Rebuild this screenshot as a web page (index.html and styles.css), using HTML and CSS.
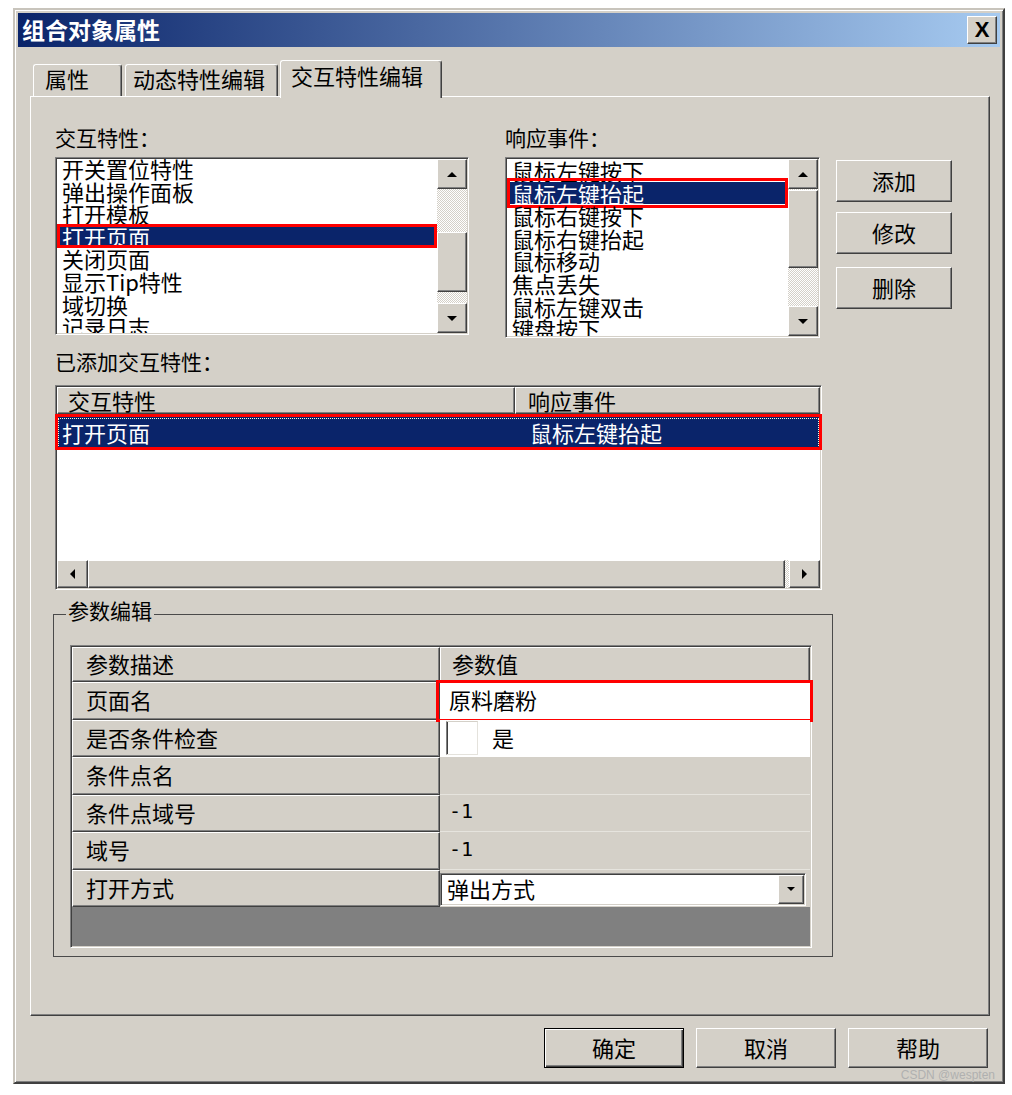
FILE: index.html
```html
<!DOCTYPE html>
<html lang="zh-CN">
<head>
<meta charset="utf-8">
<title>组合对象属性</title>
<link rel="stylesheet" href="styles.css">
</head>
<body>
<div class="dialog">
  <div class="titlebar">
    <span class="title">组合对象属性</span>
    <span class="close raised">X</span>
  </div>
  <div class="body">
    <div class="tabs">
      <div class="tab t1">属性</div>
      <div class="tab t2">动态特性编辑</div>
      <div class="tab t3">交互特性编辑</div>
    </div>
    <div class="panel">
      <div class="top-row">
        <div class="col-left">
          <div class="label">交互特性：</div>
          <div class="listbox sunken lb-left">
            <div class="items">
              <div class="item">开关置位特性</div>
              <div class="item">弹出操作面板</div>
              <div class="item">打开模板</div>
              <div class="item sel">打开页面</div>
              <div class="item">关闭页面</div>
              <div class="item">显示Tip特性</div>
              <div class="item">域切换</div>
              <div class="item">记录日志</div>
            </div>
            <div class="vscroll">
              <div class="sbtn raised"><span class="tri up"></span></div>
              <div class="track checker"><div class="thumb raised"></div></div>
              <div class="sbtn raised"><span class="tri down"></span></div>
            </div>
          </div>
        </div>
        <div class="col-mid">
          <div class="label">响应事件：</div>
          <div class="listbox sunken lb-mid">
            <div class="items">
              <div class="item">鼠标左键按下</div>
              <div class="item sel">鼠标左键抬起</div>
              <div class="item">鼠标右键按下</div>
              <div class="item">鼠标右键抬起</div>
              <div class="item">鼠标移动</div>
              <div class="item">焦点丢失</div>
              <div class="item">鼠标左键双击</div>
              <div class="item">键盘按下</div>
            </div>
            <div class="vscroll">
              <div class="sbtn raised"><span class="tri up"></span></div>
              <div class="track checker"><div class="thumb raised"></div></div>
              <div class="sbtn raised"><span class="tri down"></span></div>
            </div>
          </div>
        </div>
        <div class="btn-col">
          <div class="btn raised sidebtn">添加</div>
          <div class="btn raised sidebtn b2">修改</div>
          <div class="btn raised sidebtn b3">删除</div>
        </div>
      </div>

      <div class="label label2">已添加交互特性：</div>
      <div class="listview sunken">
        <div class="lv-head">
          <div class="lv-h raised lv-h1">交互特性</div>
          <div class="lv-h raised lv-h2">响应事件</div>
        </div>
        <div class="lv-row">
          <div class="lv-c1">打开页面</div>
          <div class="lv-c2">鼠标左键抬起</div>
        </div>
        <div class="lv-space"></div>
        <div class="hscroll checker">
          <div class="hbtn raised"><span class="tri left"></span></div>
          <div class="hthumb raised"></div>
          <div class="hbtn raised"><span class="tri right"></span></div>
        </div>
      </div>

      <fieldset class="group">
        <legend>参数编辑</legend>
        <div class="pgrid sunken">
          <div class="pl raised">参数描述</div>
          <div class="pl raised ph2">参数值</div>

          <div class="pl raised">页面名</div>
          <div class="pv white red">原料磨粉</div>

          <div class="pl raised">是否条件检查</div>
          <div class="pv white"><span class="chk"></span><span class="chk-text">是</span></div>

          <div class="pl raised">条件点名</div>
          <div class="pv gray"></div>

          <div class="pl raised">条件点域号</div>
          <div class="pv gray num">-1</div>

          <div class="pl raised">域号</div>
          <div class="pv gray num">-1</div>

          <div class="pl raised">打开方式</div>
          <div class="pv combo-cell">
            <div class="combo sunken">
              <span>弹出方式</span>
              <span class="dd raised"><span class="tri down small"></span></span>
            </div>
          </div>

          <div class="pfill"></div>
        </div>
      </fieldset>
    </div>

    <div class="footer">
      <div class="btn raised fbtn default">确定</div>
      <div class="btn raised fbtn">取消</div>
      <div class="btn raised fbtn">帮助</div>
    </div>
  </div>
  <div class="watermark">CSDN @wespten</div>
</div>
</body>
</html>
```

FILE: styles.css
```css
body {
  margin: 0;
  padding: 8px 0 0 13px;
  background: #fff;
  font-family: "Noto Sans CJK SC", "Noto Sans CJK JP", sans-serif;
  color: #000;
}

.raised {
  background: #d4d0c8;
  box-sizing: border-box;
  border: 1px solid;
  border-color: #fff #404040 #404040 #fff;
  box-shadow: inset -1px -1px #808080;
}

.sunken {
  box-sizing: border-box;
  border: 1px solid;
  border-color: #808080 #fff #fff #808080;
  padding: 1px;
  box-shadow: inset 1px 1px #404040, inset -1px -1px #d4d0c8;
}

.checker {
  background: repeating-conic-gradient(#fff 0 25%, #d4d0c8 0 50%) 0 0 / 2px 2px;
}

.dialog {
  position: relative;
  width: 992px;
  height: 1076px;
  box-sizing: border-box;
  background: #d4d0c8;
  border: 2px solid;
  border-color: #c8c4bc #404040 #404040 #c8c4bc;
  box-shadow: inset 1px 1px #fff, inset -1px -1px #808080;
  padding: 3px;
  display: flex;
  flex-direction: column;
}

.titlebar {
  height: 34px;
  flex: none;
  display: flex;
  align-items: center;
  justify-content: space-between;
  padding: 0 3px 0 4px;
  background: linear-gradient(90deg, #0a246a, #a6caf0);
}

.title {
  color: #fff;
  font-weight: 700;
  font-size: 23px;
  line-height: 32px;
  padding-bottom: 2px;
  white-space: nowrap;
}

.close {
  width: 30px;
  height: 28px;
  display: flex;
  align-items: center;
  justify-content: center;
  font: bold 22px "Liberation Sans", Arial, sans-serif;
  color: #000;
}

.body {
  flex: 1;
  display: flex;
  flex-direction: column;
  padding: 13px 10px 0 12px;
}

.tabs {
  display: flex;
  align-items: flex-end;
  height: 36px;
  flex: none;
  position: relative;
  z-index: 1;
}

.tab {
  box-sizing: border-box;
  height: 32px;
  font-size: 22px;
  line-height: 27px;
  white-space: nowrap;
  background: #d4d0c8;
  border-top: 1px solid #fff;
  border-left: 1px solid #fff;
  border-right: 1px solid #404040;
  box-shadow: inset -1px 0 #808080;
  border-radius: 3px 3px 0 0;
}

.t1 { width: 89px; margin-left: 3px; padding-left: 11px; }
.t2 { width: 153px; margin-left: 3px; padding-left: 7px; }
.t3 {
  width: 162px;
  margin-left: 2px;
  height: 38px;
  margin-bottom: -2px;
  padding-left: 10px;
  line-height: 29px;
}

.panel {
  height: 920px;
  flex: none;
  box-sizing: border-box;
  border: 1px solid;
  border-color: #fff #404040 #404040 #fff;
  box-shadow: inset -1px -1px #808080;
  padding: 29px 0 0 24px;
}

.top-row {
  display: flex;
  align-items: flex-start;
}

.col-left { width: 414px; }
.col-mid { width: 315px; margin-left: 36px; }

.btn-col {
  width: 116px;
  margin-left: 16px;
  margin-top: 34px;
  display: flex;
  flex-direction: column;
}

.label {
  font-size: 21px;
  line-height: 22px;
  height: 22px;
  margin-bottom: 9px;
  white-space: nowrap;
}

.label2 {
  margin-top: 12px;
  margin-bottom: 13px;
}

.listbox {
  display: flex;
  background: #fff;
}

.lb-left { height: 178px; }
.lb-mid { height: 181px; }

.items {
  flex: 1;
  overflow: hidden;
  background: #fff;
}

.lb-left .item:first-child { margin-top: -2px; }

.item {
  font-size: 22px;
  line-height: 22.6px;
  height: 22.6px;
  padding-left: 5px;
  white-space: nowrap;
  position: relative;
}

.item.sel {
  background: #0a246a;
  color: #fff;
}

.item.sel::after {
  content: "";
  position: absolute;
  left: 0;
  right: 0;
  top: -1px;
  bottom: -1px;
  border: 3px solid #f00;
}

.lb-mid .item.sel::after {
  top: -4px;
  bottom: -4px;
}

.vscroll {
  width: 30px;
  flex: none;
  display: flex;
  flex-direction: column;
}

.sbtn {
  height: 30px;
  flex: none;
  display: flex;
  align-items: center;
  justify-content: center;
}

.track {
  flex: 1;
  display: flex;
  flex-direction: column;
}

.lb-left .thumb { margin-top: 43px; height: 60px; }
.lb-mid .thumb { margin-top: 1px; height: 78px; }

.tri {
  width: 0;
  height: 0;
  border-style: solid;
  display: block;
}
.tri.up { border-width: 0 5px 5px; border-color: transparent transparent #000; }
.tri.down { border-width: 5px 5px 0; border-color: #000 transparent transparent; }
.tri.left { border-width: 5px 5px 5px 0; border-color: transparent #000 transparent transparent; }
.tri.right { border-width: 5px 0 5px 5px; border-color: transparent transparent transparent #000; }
.tri.small { border-width: 4px 4px 0; }

.btn {
  display: flex;
  align-items: center;
  justify-content: center;
  font-size: 22px;
  white-space: nowrap;
  padding-bottom: 3px;
}

.sidebtn { height: 42px; }
.b2 { margin-top: 10px; }
.b3 { margin-top: 13px; }

.listview {
  width: 767px;
  height: 205px;
  display: flex;
  flex-direction: column;
  background: #fff;
}

.lv-head {
  display: flex;
  height: 27px;
  flex: none;
}

.lv-h {
  font-size: 22px;
  line-height: 24px;
  white-space: nowrap;
}

.lv-h1 { width: 458px; padding-left: 10px; }
.lv-h2 { flex: 1; padding-left: 12px; }

.lv-row {
  margin-top: 3px;
  height: 32px;
  flex: none;
  display: flex;
  align-items: center;
  background: #0a246a;
  color: #fff;
  font-size: 22px;
  position: relative;
  white-space: nowrap;
  padding-bottom: 2px;
  box-sizing: border-box;
}

.lv-row::before {
  content: "";
  position: absolute;
  left: 1px;
  right: 1px;
  top: 1px;
  bottom: 1px;
  border: 1px dotted #fffbd8;
}

.lv-row::after {
  content: "";
  position: absolute;
  left: -2px;
  right: -2px;
  top: -3px;
  bottom: -1px;
  border: 3px solid #f00;
}

.lv-c1 { width: 458px; padding-left: 5px; box-sizing: border-box; }
.lv-c2 { padding-left: 15px; }

.lv-space { flex: 1; }

.hscroll {
  height: 28px;
  flex: none;
  display: flex;
}

.hbtn {
  width: 31px;
  flex: none;
  display: flex;
  align-items: center;
  justify-content: center;
}

.hthumb {
  flex: 1;
  margin-right: 4px;
}

.group {
  margin: 9px 0 0 -2px;
  width: 780px;
  box-sizing: border-box;
  border: 1px solid #4a4a4a;
  padding: 16px 21px 8px 16px;
  min-width: 0;
}

.group legend {
  font-size: 21px;
  line-height: 22px;
  padding: 0 2px 8px;
  margin-left: -4px;
  white-space: nowrap;
}

.pgrid {
  display: grid;
  grid-template-columns: 368px 1fr;
  grid-template-rows: 35px repeat(6, 37.5px) 1fr;
  width: 742px;
  height: 303px;
  background: #808080;
}

.pl {
  font-size: 22px;
  display: flex;
  align-items: center;
  padding-left: 13px;
  padding-bottom: 3px;
  white-space: nowrap;
}

.ph2 { padding-left: 11px; }

.pv {
  display: flex;
  align-items: center;
  font-size: 22px;
  padding-left: 9px;
  padding-bottom: 3px;
  box-sizing: border-box;
  position: relative;
  white-space: nowrap;
}

.pv.white { background: #fff; }

.pv.gray {
  background: #d4d0c8;
  border-bottom: 1px solid #e6e4de;
}

.pv.num {
  font-family: "DejaVu Sans Mono", "Liberation Mono", monospace;
  font-size: 20px;
}

.pv.red::after {
  content: "";
  position: absolute;
  left: -4px;
  right: -3px;
  top: -2px;
  bottom: -2px;
  border: 3px solid #f00;
}

.chk {
  width: 32px;
  height: 34px;
  box-sizing: border-box;
  border: 1px solid;
  border-color: #d4d0c8 #e4e2dc #e4e2dc #808080;
  box-shadow: inset 1px 0 #404040;
  background: #fff;
  margin-left: -3px;
  margin-top: 3px;
}

.chk-text { margin-left: 14px; }

.combo-cell {
  background: #d4d0c8;
  padding: 3px 4px 1px 0;
  align-items: stretch;
}

.combo {
  flex: 1;
  display: flex;
  align-items: center;
  background: #fff;
  font-size: 22px;
  padding-left: 6px;
}

.combo > span:first-child { margin-top: -3px; }

.dd {
  margin-left: auto;
  width: 26px;
  align-self: stretch;
  display: flex;
  align-items: center;
  justify-content: center;
}

.pfill {
  grid-column: 1 / -1;
  background: #808080;
}

.footer {
  display: flex;
  justify-content: flex-end;
  gap: 12px;
  margin-top: 12px;
  padding-right: 2px;
}

.fbtn {
  width: 140px;
  height: 40px;
}

.fbtn.default {
  border-color: #000;
  box-shadow: inset 1px 1px #fff, inset -1px -1px #404040, inset -2px -2px #808080;
}

.watermark {
  position: absolute;
  right: 8px;
  bottom: 0;
  font: 12px "Liberation Sans", Arial, sans-serif;
  color: #b0b0b0;
  line-height: 14px;
  white-space: nowrap;
}
```
